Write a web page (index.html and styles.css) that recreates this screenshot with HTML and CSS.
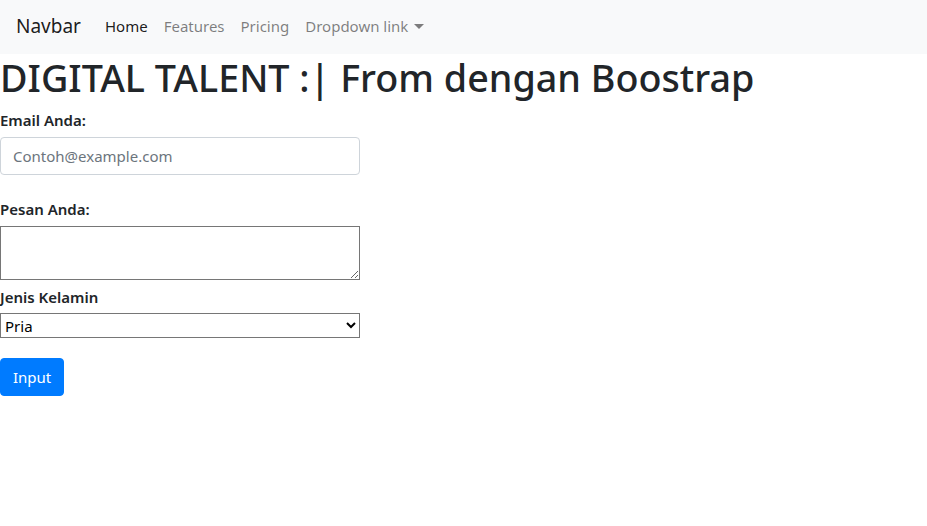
FILE: index.html
```html
<!DOCTYPE html>
<html lang="id">
<head>
<meta charset="utf-8">
<title>Digital Talent</title>
<link rel="stylesheet" href="styles.css">
</head>
<body>
<nav class="navbar">
  <a class="brand" href="#">Navbar</a>
  <ul class="nav">
    <li><a class="nav-link active" href="#">Home</a></li>
    <li><a class="nav-link" href="#">Features</a></li>
    <li><a class="nav-link" href="#">Pricing</a></li>
    <li><a class="nav-link dropdown" href="#">Dropdown link<span class="caret"></span></a></li>
  </ul>
</nav>
<h1 class="title">DIGITAL TALENT :| From dengan Boostrap</h1>
<form class="form">
  <div class="group group-email">
    <label class="label" for="email">Email Anda:</label>
    <input class="control" id="email" type="email" placeholder="Contoh@example.com">
  </div>
  <div class="group group-msg">
    <label class="label" for="pesan">Pesan Anda:</label>
    <textarea class="textarea" id="pesan"></textarea>
  </div>
  <div class="group group-sel">
    <label class="label" for="jk">Jenis Kelamin</label>
    <select class="select" id="jk">
      <option>Pria</option>
      <option>Wanita</option>
    </select>
  </div>
  <button class="btn" type="button">Input</button>
</form>
</body>
</html>
```

FILE: styles.css
```css
* { box-sizing: border-box; }
body {
  margin: 0;
  font-family: "Noto Sans", "Open Sans", sans-serif;
  font-size: 15px;
  line-height: 24px;
  color: #212529;
  background: #fff;
}
.navbar {
  display: flex;
  align-items: center;
  height: 54px;
  padding: 0 16px 2px;
  background: #f8f9fa;
}
.brand {
  font-size: 19px;
  color: rgba(0,0,0,.9);
  text-decoration: none;
  margin-right: 16px;
}
.nav {
  display: flex;
  list-style: none;
  margin: 0;
  padding: 0;
}
.nav-link {
  display: block;
  padding: 0 8px;
  color: rgba(0,0,0,.5);
  text-decoration: none;
}
.nav-link.active { color: rgba(0,0,0,.9); }
.caret {
  display: inline-block;
  margin-left: 6px;
  vertical-align: 3px;
  border-top: 5px solid;
  border-left: 5px solid transparent;
  border-right: 5px solid transparent;
}
.title {
  margin: 0 0 8px;
  font-size: 37.7px;
  font-weight: 500;
  line-height: 48px;
}
.form { width: 360px; }
.group { display: flex; flex-direction: column; }
.label {
  font-weight: 600;
  margin-bottom: 3px;
}
.group-email .label { margin: -2px 0 5px; }
.control {
  height: 38px;
  padding: 6px 12px;
  font: inherit;
  color: #495057;
  border: 1px solid #ced4da;
  border-radius: 4px;
  margin-bottom: 22px;
}
.control::placeholder { color: #6c757d; }
.textarea {
  height: 54px;
  resize: vertical;
  border: 1px solid #767676;
  margin-top: 2px;
}
.group-sel .label { margin: 5px 0 4px; }
.select {
  height: 25px;
  font: inherit;
  font-size: 15px;
  border: 1px solid #767676;
  border-radius: 0;
  background: #fff;
  color: #000;
}
.btn {
  margin-top: 20px;
  height: 38px;
  padding: 6px 12px;
  font: inherit;
  color: #fff;
  background: #007bff;
  border: 1px solid #007bff;
  border-radius: 4px;
}
```
